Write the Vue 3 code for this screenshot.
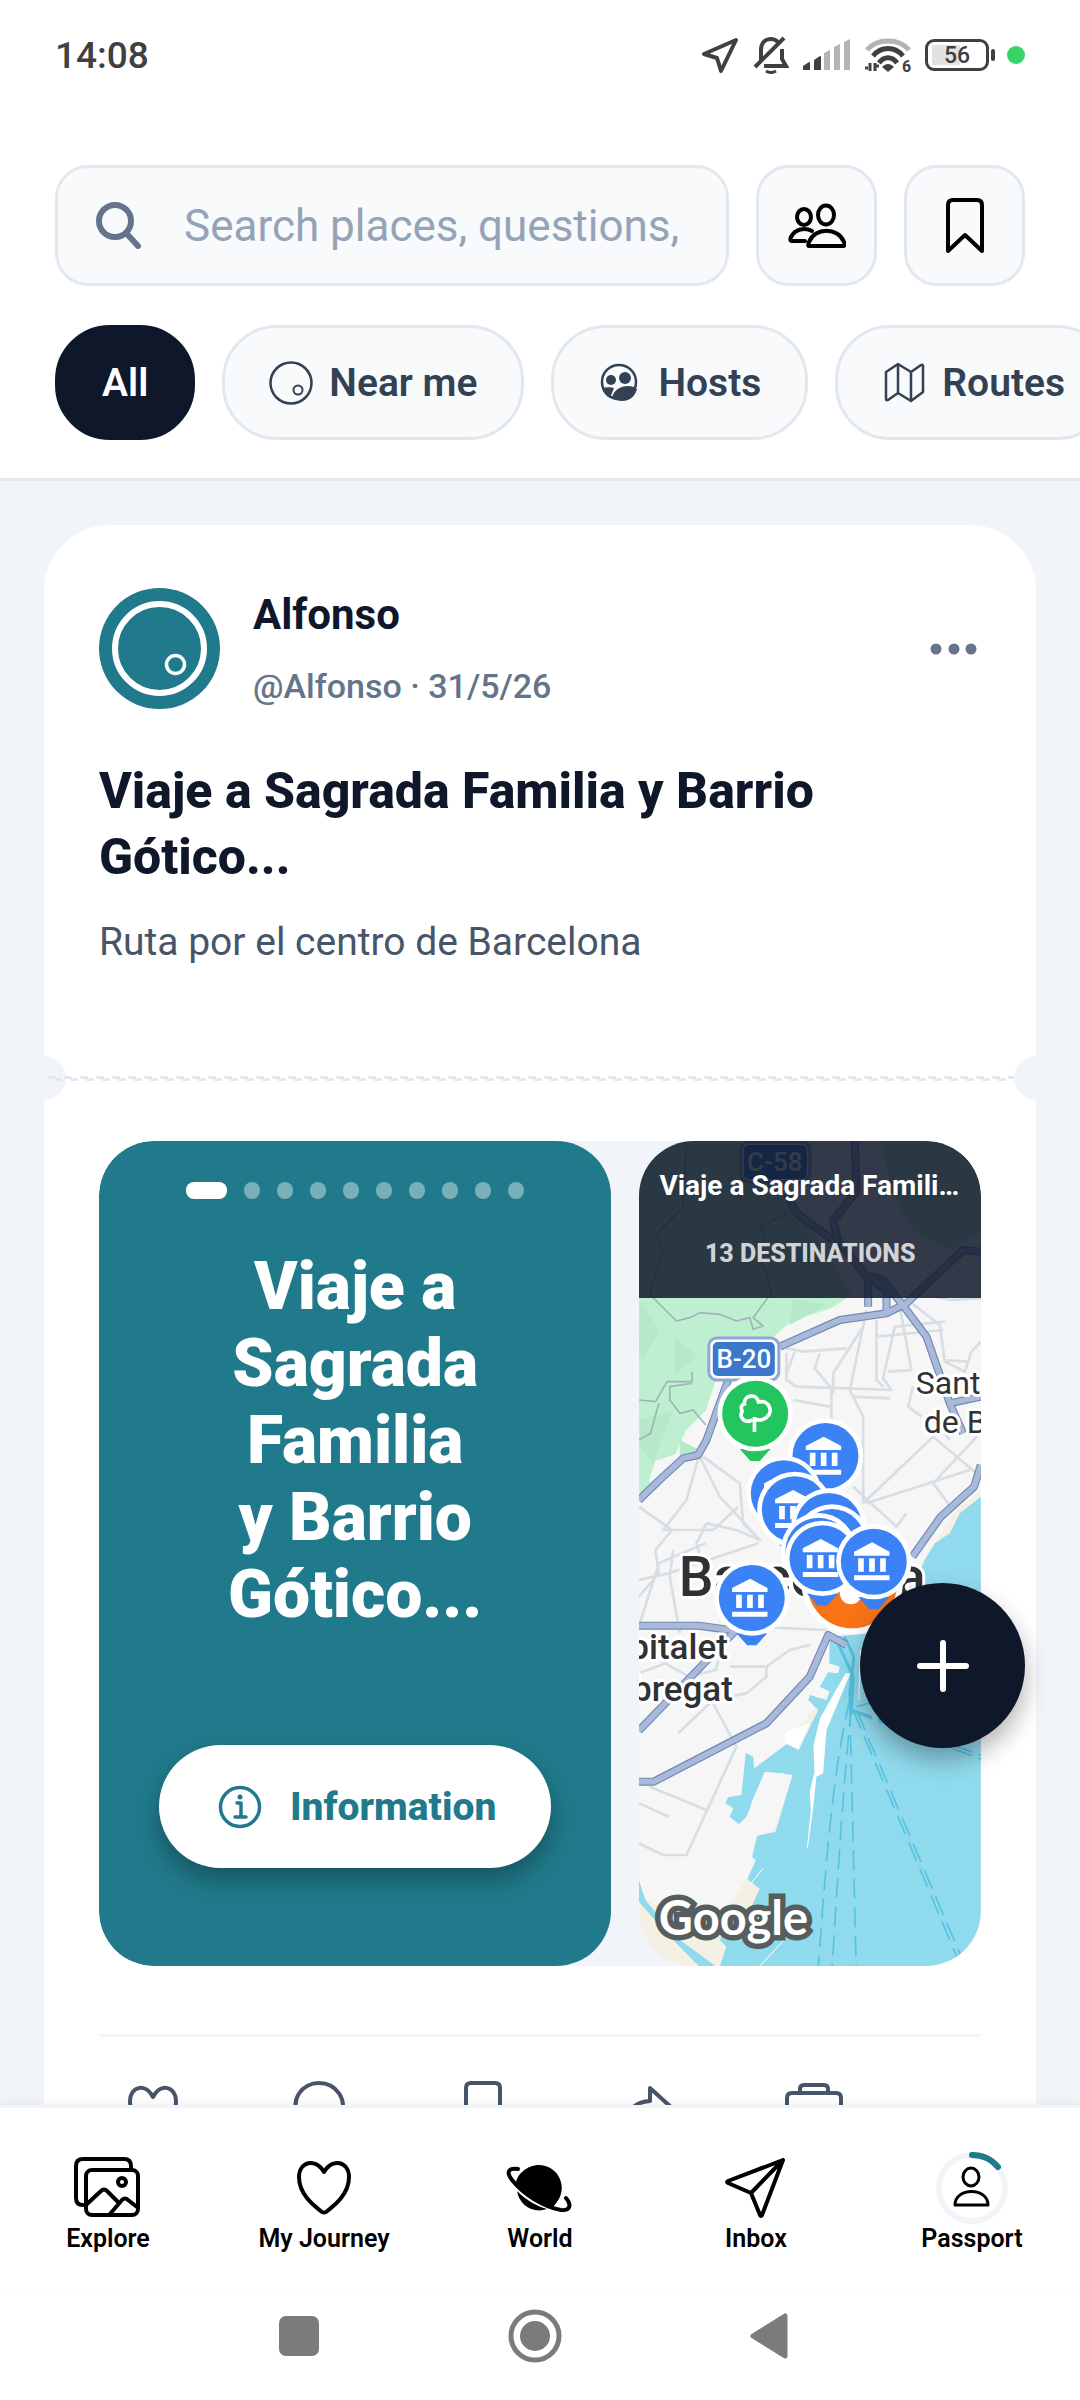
<template>
  <div class="app">
    <div class="status-bar">
      <span class="clock">14:08</span>
      <div class="status-icons">
        <svg width="38" height="38" viewBox="0 0 38 38" fill="none" stroke="#404040" stroke-width="4" stroke-linejoin="round">
          <path d="M35 4 20 35l-4-13L3 18z" />
        </svg>
        <svg width="36" height="38" viewBox="0 0 36 38" fill="none" stroke="#404040" stroke-width="4">
          <path d="M8 25V14C8 7 12 3 18 3c3 0 5 1 7 3M29 13v10l4 7H11" />
          <path d="M2 31 31 2" />
          <path d="M13 35q5 3 10 0" stroke-width="3" />
        </svg>
        <svg width="48" height="32" viewBox="0 0 48 32">
          <path d="M0 31v-4l6-4q1 0 1 1v7zM11 31V21l6-4q1 0 1 1v13z" fill="#404040" />
          <path d="M21 31V14l6-3v20zM31 31V8l6-3v26zM41 31V3l6-3v31z" fill="#b4b4b4" />
        </svg>
        <svg class="wifi" width="46" height="36" viewBox="0 0 46 36" fill="none" stroke-width="5">
          <path d="M2 13C12 1 34 1 44 13" stroke="#b4b4b4" />
          <path d="M8 19C16 9 30 9 38 19M14 26c5-7 13-7 18 0" stroke="#404040" />
          <path d="m17 30c4-4 8-4 12 0l-6 5z" fill="#404040" />
          <path d="M5 26v8M10 26v8M0 31h3M11 29h3" stroke="#404040" stroke-width="3" />
          <text x="37" y="35" class="wifi-gen">6</text>
        </svg>
        <div class="battery"><span>56</span></div>
        <span class="live-dot"></span>
      </div>
    </div>

    <header class="header">
      <div class="search-row">
        <label class="search">
          <svg width="47" height="47" viewBox="0 0 47 47" fill="none" stroke="#64748b" stroke-width="6" stroke-linecap="round">
            <circle cx="19" cy="19" r="16" />
            <path d="m31 32 11 12" />
          </svg>
          <input v-model="query" type="text" placeholder="Search places, questions," aria-label="Search" />
        </label>
        <button type="button" class="square-btn" aria-label="People">
          <svg width="58" height="46" viewBox="0 0 58 46" fill="none" stroke="#000" stroke-width="4" stroke-linecap="round" stroke-linejoin="round">
            <ellipse cx="16" cy="14" rx="7" ry="8" />
            <ellipse cx="38" cy="12" rx="8" ry="9.500" />
            <path d="M21 43h34c2 0 2-2 1-4-6-15-29-15-35 0-1 2-1 4 0 4z" />
            <path d="M17 38H4c-2 0-2-2-1-4 4-8 14-10 21-6" />
          </svg>
        </button>
        <button type="button" class="square-btn" aria-label="Saved">
          <svg width="40" height="57" viewBox="0 0 40 57" fill="none" stroke="#000" stroke-width="4" stroke-linejoin="round">
            <path d="M3 54V8q0-5 5-5h24q5 0 5 5v46L20 38z" />
          </svg>
        </button>
      </div>
      <div class="chips">
        <button
          v-for="chip in chips"
          :key="chip.name"
          type="button"
          :class="['chip', { active: chip.name === selected }]"
          @click="selected = chip.name"
        >
          <svg v-if="chip.icon" width="44" height="44" viewBox="0 0 44 44" fill="none" stroke="currentColor" stroke-width="2.500" stroke-linejoin="round">
            <template v-if="chip.icon === 'near'">
              <circle cx="22" cy="22" r="20.500" />
              <circle cx="29" cy="29" r="4.500" stroke-width="2" />
            </template>
            <template v-if="chip.icon === 'hosts'">
              <circle cx="21" cy="21" r="17" />
              <g fill="currentColor" stroke="none">
                <circle cx="13" cy="19" r="5" />
                <circle cx="27" cy="17" r="6" />
                <path d="M4 27c4-1 9-1 12 0l-4 10C8 35 5 31 4 27z" />
                <path d="M14 37c2-12 18-15 25-9-3 12-15 15-25 9z" />
              </g>
            </template>
            <template v-if="chip.icon === 'routes'">
              <path d="m4 11 12-8 13 8 10-7q2-1 2 1v26L29 40l-13-8-10 7q-2 1-2-1zM16 3v29M29 11v29" />
            </template>
          </svg>
          {{ chip.name }}
        </button>
      </div>
    </header>

    <main class="feed">
      <article class="card">
        <div class="author">
          <svg class="avatar" width="121" height="121" viewBox="0 0 121 121" fill="none" stroke="#fff">
            <circle cx="60.500" cy="60.500" r="60.500" fill="#207a8b" stroke="none" />
            <circle cx="60.500" cy="60.500" r="44.500" stroke-width="6" />
            <circle cx="76.500" cy="76.500" r="9" stroke-width="3.500" />
          </svg>
          <div class="author-text">
            <strong>Alfonso</strong>
            <span>@Alfonso · 31/5/26</span>
          </div>
          <button type="button" class="more" aria-label="More options">
            <svg width="48" height="12" viewBox="0 0 48 12" fill="#64748b">
              <circle cx="6" cy="6" r="5.500" /><circle cx="24" cy="6" r="5.500" /><circle cx="41" cy="6" r="5.500" />
            </svg>
          </button>
        </div>
        <h2>Viaje a Sagrada Familia y Barrio Gótico...</h2>
        <p class="description">Ruta por el centro de Barcelona</p>

        <div class="perforation"></div>

        <div class="media">
          <section class="slide">
            <div class="dots">
              <i v-for="n in 10" :key="n" :class="{ on: n === 1 }"></i>
            </div>
            <h3>Viaje a<br />Sagrada<br />Familia<br />y Barrio<br />Gótico...</h3>
            <button type="button" class="info-btn">
              <svg width="44" height="44" viewBox="0 0 44 44" fill="none" stroke="currentColor" stroke-width="3.500" stroke-linecap="round" stroke-linejoin="round">
                <circle cx="22" cy="22" r="19.500" />
                <path d="M19 18h4v14M17 32h11" />
                <circle cx="22" cy="12" r="2.500" fill="currentColor" stroke="none" />
              </svg>
              Information
            </button>
          </section>

          <section class="map">
            <svg class="map-canvas" viewBox="0 0 342 825" preserveAspectRatio="xMidYMid slice">
              <g transform="scale(.33333) translate(-57 -63)" fill="none" stroke-linejoin="round">
                <path fill="#f6f6f6" d="M57 63h1026v2475H57z" />
                <!-- parks -->
                <path fill="#beefd1" d="M57 63h300l220 270 120 190-60 40-120 40-60 50-80 10-30 60-60 60-30 90-60 60-30 70-60 20-20 60 20 10-40 30-50-50z" />
                <path fill="#beefd1" d="M790 63h293v270l-90 60-120-70-60-110z" />
                <path fill="#b6e8ca" d="m60 540 60 90-50 90-13-20zM165 650l70 60-70 55zM520 535l100 20-110 60zM60 900l100-30-60 160-40-50zM180 960l60 30-60 30z" />
                <!-- sea and harbour -->
                <path fill="#f4f0e4" d="M1083 1110 1000 1180 950 1265 905 1325 880 1440 700 1550 640 1700 520 1840 480 1840 470 1960 520 1960 460 2140 330 2360 240 2420 57 2330V2538h1026z" />
                <path fill="#f6f6f6" d="m880 1440-180 110-60 150-120 140-20 40-60 95-30 190-80 110-60-20 120-300 50-320 220-200z" />
                <path fill="#90daee" d="M1083 1130 1020 1180 990 1240 945 1270 915 1320 870 1420 760 1540 630 1550 628 1630 660 1640 655 1660 625 1657 600 1700 630 1715 620 1740 570 1725 565 1740 595 1770 537 1890 500 1873 403 1945 400 1910 378 1898 365 2025 325 2032 317 2050 340 2065 330 2090 357 2113 380 2090 435 1955 518 1965 467 2137 413 2142 397 2210 408 2220 383 2277 420 2307 385 2380 320 2410 300 2460 320 2480 300 2538h783z" />
                <path fill="#f6f6f6" d="m435 1957 60 3-38 177-80 20 18-110z" />
                <path fill="#90daee" d="m57 2280 20 60 90 110 120 88h-50L150 2450 57 2345z" />
                <path fill="#fff" d="m692 1660-72 170-10 130-20 10-12 110-14 105h-3l12-110-3-60 14-60-3-80 20-80 76-135zM725 1590l-7 150M500 1835l70-25-35 78-42-22z" />
                <path stroke="#fff" stroke-width="3" d="m430 2245-40 50M550 2400l-130 138M722 1590l-5 150" />
                <!-- ferry lines -->
                <g stroke="#55c3df" stroke-width="5">
                  <path stroke-width="9" d="m655 1570 45 100-5 110-5-60 12-110-28-60" />
                  <path stroke-dasharray="60 26" d="M690 1740C640 1950 620 2200 596 2538M695 1760C670 2000 655 2250 637 2538M690 1760 709 2538M700 1770l310 738M712 1775l312 735" />
                  <path stroke-dasharray="60 20" d="m700 1770 383 135M700 1775l383 142M710 1760l110-30" />
                </g>
                <!-- streets -->
                <g stroke="#d7dee4" stroke-width="8">
                  <path d="m480 680 70 15 130-10M600 700l-15 45 50 60v190M500 760l25-65M500 700v80l30 20 285 10-25-35 35-155 150-15M740 570l-50 240 40 80v260M770 600v180l20 20M770 650l200-20M840 560l35 190-70 5M700 830l110 5M520 840l110 20M880 800l-15 60 40 30M730 620l-90 140v60" />
                  <path d="m870 545 90 70 15 110 60 30 20-60 28-30M1083 535l-90 5-50-10M970 720l80 5M730 1150l210-200 130 110M740 1150l310-100M700 1100l130 120 30-40M940 1090l60 80M940 1090l140-150M960 920l30 40" />
                  <path d="m240 1000-40 140-70 90h150l75-70M240 1010l60 120 120 130-70-30-90-20-30 60 30 100M57 1160l100 70-50 60 10 70-60 70M250 1010l110 80 10 120 50 50M57 1520l60-190 140-60M57 1380l90-20 180-60 90-30M160 1290l-10 80 30 170" />
                  <path d="m57 1660 80-30 70 40 80-20 20-60M330 1640h110l70-50 60-15M440 1640v30l-60 50-50 10-60 20-95 90M280 1750l70 130-150 325h-70L57 2170M90 2000l170 70M57 2050l90 40M400 1520l220 10" />
                </g>
                <g stroke="#9fb5b5" stroke-width="5">
                  <path d="M200 63l-10 200-80 80 20 50-40 130 80 80 40-10 30-15 60 5 50 20 40-10 10 35 30-10-30-25 55-75-15-60-25-50 20-40-10-50 80-40M57 840l50 5 35-60h75v-30M57 960l35-20 25-90" />
                  <path d="m215 790-65 10v40l30 40 40-10 38 45" />
                </g>
                <!-- motorways -->
                <g v-for="layer in roadLayers" :key="layer.color" :stroke="layer.color">
                  <path :stroke-width="layer.width" d="M57 1140 130 1070 190 1015 235 1005 260 960 325 780M480 680 660 600 800 580 860 550 1030 390 1083 395" />
                  <path :stroke-width="layer.width" d="m705 63 5 150-70 90 15 60L745 475v85M500 220l30 60 110 80M800 575v-60l-50-45 40 10 70 90 60 80 70 200 40 90M990 850l93-20M1083 1035l-20 65-100 90-85 120" />
                  <path :stroke-width="layer.width" d="M57 1985h45L440 1810l130-140 55-125 55 30M57 1517h180l110 15-290 300" />
                </g>
              </g>

              <g class="place">
                <text x="277" y="253" font-size="32">Sant</text>
                <text x="285" y="292" font-size="32">de B</text>
                <text x="89" y="518" font-size="35" font-weight="500" text-anchor="end">pitalet</text>
                <text x="94" y="560" font-size="35" font-weight="500" text-anchor="end">bregat</text>
                <text x="40" y="455" font-size="55" font-weight="500">Barcelona</text>
              </g>
              <g class="road-sign">
                <rect x="102" y="1" width="69" height="40" rx="8" />
                <rect class="inner" x="105" y="4" width="63" height="34" rx="5" />
                <text x="136" y="30">C-58</text>
                <rect x="70" y="197" width="70" height="42" rx="8" />
                <rect class="inner" x="74" y="201" width="62" height="34" rx="5" />
                <text x="105" y="227">B-20</text>
              </g>

              <g transform="scale(.33333) translate(-57 -63)">
                <circle cx="697" cy="1390" r="152" fill="#fff" />
                <circle cx="697" cy="1390" r="135" fill="#f97316" />
                <circle cx="693" cy="1420" r="33" fill="#fff" />
                <g v-for="pin in pins" :key="pin.id" :transform="`translate(${pin.x} ${pin.y})`">
                  <path :fill="pin.color" d="M-46 106h92l-32 36h-28z" />
                  <circle r="113" fill="#fff" />
                  <circle r="99" :fill="pin.color" />
                  <path v-if="pin.type === 'museum'" fill="#fff" d="M-59-18v-12L-5-58 47-30v12zM-47-10h17v40h-17zM-14-10H3v40h-17zM19-10h17v40H19zM-59 41H47v15H-59z" />
                  <path v-else fill="none" stroke="#fff" stroke-width="11" d="M-2 55V10M-8 18c-20 14-42-5-31-25-6-14 0-21 7-22C-36-55 5-64 10-35 42-43 56-5 35 10 24 22 8 20 0 16" />
                </g>
              </g>
              <text class="google" x="20" y="794">Google</text>
            </svg>
            <div class="map-header">
              <strong>Viaje a Sagrada Familia y Barrio Gótico...</strong>
              <span>13 DESTINATIONS</span>
            </div>
          </section>
        </div>

        <div class="actions">
          <button v-for="action in actions" :key="action.name" type="button" :aria-label="action.name">
            <svg width="60" height="60" viewBox="0 0 60 60" fill="none" stroke="#475569" stroke-width="4" stroke-linejoin="round" stroke-linecap="round">
              <path :d="action.path" />
            </svg>
          </button>
        </div>
      </article>
    </main>

    <button type="button" class="fab" aria-label="Create">
      <svg width="54" height="54" viewBox="0 0 54 54" fill="none" stroke="#fff" stroke-width="6" stroke-linecap="round">
        <path d="M27 4v46M4 27h46" />
      </svg>
    </button>

    <nav class="tabs">
      <a v-for="tab in tabs" :key="tab.name" href="#" @click.prevent>
        <svg width="72" height="72" viewBox="0 0 72 72" fill="none" stroke="#000" stroke-width="4" stroke-linejoin="round" stroke-linecap="round">
          <template v-if="tab.icon === 'explore'">
            <path d="M11 53q-7 0-7-7V14q0-7 7-7h41q7 0 7 7v3" />
            <rect x="14" y="18" width="52" height="45" rx="6" />
            <circle cx="50" cy="30" r="4" />
            <path d="m15 52 14-13q3-3 6 0l12 12M38 62l12-14q3-3 6 0l9 7" />
          </template>
          <path v-if="tab.icon === 'heart'" d="M36 20C27 5 11 10 11 25c0 17 14 28 23 35q2 1 4 0c9-7 23-18 23-35 0-15-16-20-25-5z" />
          <template v-if="tab.icon === 'world'">
            <g fill="#000" stroke="none">
              <path d="M12 32C12 23 23 13 35 13a23 23 0 0 1 18 37l-4 5C35 51 22 43 12 32z" />
              <path d="M13 39c9 9 19 15 30 18-14 5-28-4-30-18z" />
            </g>
            <path d="M14 17C4 16 2 20 8 28c12 15 32 27 49 30 9 1 11-5 5-12" />
          </template>
          <path v-if="tab.icon === 'inbox'" d="M63 8 8 29q-2 1 0 2l23 10 9 22q1 2 2 0L63 8 31 41" />
          <template v-if="tab.icon === 'passport'">
            <circle cx="36" cy="36" r="33" stroke="#f1f5f9" stroke-width="6" />
            <path d="M36 3q16 0 26 12" stroke="#207a8b" stroke-width="6" />
            <g stroke-width="3">
              <ellipse cx="35" cy="25" rx="8" ry="9" />
              <path d="M19 53h33c0-18-33-18-33 0z" />
            </g>
          </template>
        </svg>
        <span>{{ tab.name }}</span>
      </a>
    </nav>

    <div class="system-nav">
      <button type="button" aria-label="Recents">
        <svg width="56" height="56" viewBox="0 0 56 56" fill="#7b7b7b"><rect x="8" y="8" width="40" height="40" rx="7" /></svg>
      </button>
      <button type="button" aria-label="Home">
        <svg width="56" height="56" viewBox="0 0 56 56" fill="#7b7b7b">
          <circle cx="28" cy="28" r="24" fill="none" stroke="#7b7b7b" stroke-width="5" />
          <circle cx="28" cy="28" r="15" />
        </svg>
      </button>
      <button type="button" aria-label="Back">
        <svg width="56" height="56" viewBox="0 0 56 56" fill="#7b7b7b" stroke="#7b7b7b" stroke-width="5" stroke-linejoin="round"><path d="M42 8v40L10 28z" /></svg>
      </button>
    </div>
  </div>
</template>

<script setup>
import { ref } from 'vue'

const query = ref('')
const selected = ref('All')

const chips = [
  { name: 'All' },
  { name: 'Near me', icon: 'near' },
  { name: 'Hosts', icon: 'hosts' },
  { name: 'Routes', icon: 'routes' },
]

const roadLayers = [
  { color: '#7488b4', width: 24 },
  { color: '#a8b9d9', width: 17 },
]

const blue = '#3b82f6'
const pins = [
  { id: 1, x: 406, y: 881, color: '#22c55e', type: 'park' },
  { id: 2, x: 617, y: 1008, color: blue, type: 'museum' },
  { id: 3, x: 492, y: 1120, color: blue, type: 'museum' },
  { id: 4, x: 525, y: 1168, color: blue, type: 'museum' },
  { id: 5, x: 627, y: 1218, color: blue, type: 'museum' },
  { id: 6, x: 637, y: 1266, color: blue, type: 'museum' },
  { id: 7, x: 596, y: 1292, color: blue, type: 'museum' },
  { id: 8, x: 608, y: 1315, color: blue, type: 'museum' },
  { id: 9, x: 762, y: 1325, color: blue, type: 'museum' },
  { id: 10, x: 396, y: 1434, color: blue, type: 'museum' },
]

const actions = [
  { name: 'Like', path: 'M29 18C21 3 6 8 6 22c0 14 12 24 23 32 11-8 23-18 23-32 0-14-15-19-23-4z' },
  { name: 'Comment', path: 'M8 54l3-14C-1 20 14 4 30 4s31 16 20 36C43 52 27 56 8 54z' },
  { name: 'Save', path: 'M12 56V9q0-5 5-5h24q5 0 5 5v47L29 42z' },
  { name: 'Share', path: 'M31 9l22 20-22 20V38C18 37 10 42 5 50 6 34 14 23 31 22z' },
  { name: 'Trip', path: 'M8 14h44q5 0 5 5v32q0 5-5 5H8q-5 0-5-5V19q0-5 5-5zM16 14v-4q0-4 4-4h20q4 0 4 4v4' },
]

const tabs = [
  { name: 'Explore', icon: 'explore' },
  { name: 'My Journey', icon: 'heart' },
  { name: 'World', icon: 'world' },
  { name: 'Inbox', icon: 'inbox' },
  { name: 'Passport', icon: 'passport' },
]
</script>

<style>
body {
  margin: 0;
  background: #fff;
}
</style>

<style scoped>
* {
  box-sizing: border-box;
}
.app {
  position: relative;
  display: flex;
  flex-direction: column;
  height: 100vh;
  overflow: hidden;
  background: #fff;
  color: #0f172a;
  font-family: Roboto, 'Noto Sans', sans-serif;
}
button {
  padding: 0;
  border: none;
  background: none;
  font: inherit;
  color: inherit;
  cursor: pointer;
}
svg {
  display: block;
  flex: none;
}
.status-bar {
  display: flex;
  align-items: center;
  justify-content: space-between;
  height: 110px;
  padding: 0 55px;
  color: #404040;
}
.clock {
  font-size: 37px;
  font-weight: 500;
}
.status-icons {
  display: flex;
  align-items: center;
  gap: 14px;
}
.wifi {
  overflow: visible;
}
.wifi-gen {
  fill: #404040;
  stroke: none;
  font-size: 16px;
  font-weight: 700;
}
.battery {
  position: relative;
  display: flex;
  align-items: center;
  justify-content: center;
  width: 64px;
  height: 32px;
  border: 3px solid #404040;
  border-radius: 9px;
  background: linear-gradient(#e2e2e2, #e2e2e2) 4px center / 28px 20px no-repeat;
  font-size: 23px;
  font-weight: 500;
}
.battery::after {
  content: '';
  position: absolute;
  right: -9px;
  width: 4px;
  height: 12px;
  border-radius: 2px;
  background: #404040;
}
.live-dot {
  width: 18px;
  height: 18px;
  margin-left: 4px;
  border-radius: 50%;
  background: #36d367;
}
.header {
  padding: 55px 0 38px 55px;
  border-bottom: 3px solid #e2e8f0;
}
.search-row {
  display: flex;
  gap: 27px;
  padding-right: 55px;
}
.search {
  display: flex;
  flex: 1;
  align-items: center;
  gap: 41px;
  min-width: 0;
  height: 121px;
  padding: 0 38px;
  border: 3px solid #e2e8f0;
  border-radius: 33px;
  background: #f8fafc;
}
.search input {
  flex: 1;
  min-width: 0;
  padding: 0;
  border: none;
  outline: none;
  background: none;
  font-family: inherit;
  font-size: 44px;
  color: #0f172a;
}
.search input::placeholder {
  color: #94a3b8;
}
.square-btn {
  display: grid;
  place-items: center;
  width: 121px;
  height: 121px;
  border: 3px solid #e2e8f0;
  border-radius: 33px;
  background: #f8fafc;
}
.chips {
  display: flex;
  gap: 27px;
  margin-top: 39px;
  overflow: hidden;
}
.chip {
  display: flex;
  flex: none;
  align-items: center;
  gap: 16px;
  height: 115px;
  padding: 0 44px;
  border: 3px solid #e2e8f0;
  border-radius: 55px;
  background: #f8fafc;
  color: #334155;
  font-size: 39px;
  font-weight: 600;
}
.chip.active {
  border-color: #0f172a;
  background: #0f172a;
  color: #fff;
}
.feed {
  flex: 1;
  min-height: 0;
  padding: 44px 44px 0;
  overflow: hidden;
  background: #f1f5f9;
}
.card {
  padding: 63px 55px 55px;
  border-radius: 66px;
  background: #fff;
}
.author {
  display: flex;
  align-items: center;
  gap: 33px;
}
.author-text {
  display: flex;
  flex: 1;
  flex-direction: column;
  gap: 24px;
}
.author-text strong {
  font-size: 42px;
  font-weight: 700;
  line-height: 50px;
}
.author-text span {
  color: #64748b;
  font-size: 34px;
  font-weight: 500;
  line-height: 44px;
}
.more {
  padding: 22px 3px 22px 0;
}
h2 {
  margin: 49px 0 0;
  font-size: 50px;
  font-weight: 800;
  line-height: 66px;
}
.description {
  margin: 25px 0 0;
  color: #475569;
  font-size: 39px;
  line-height: 55px;
}
.perforation {
  position: relative;
  height: 44px;
  margin: 86px -55px 41px;
  overflow: hidden;
  background:
    repeating-linear-gradient(90deg, #e2e8f0 0 8px, transparent 8px 16px) 4px 20px / 100% 3px no-repeat,
    repeating-linear-gradient(90deg, #e2e8f0 0 8px, transparent 8px 16px) 10px 22px / 100% 3px no-repeat,
    radial-gradient(circle at 0 50%, #f1f5f9 22px, transparent 22px);
}
.perforation::after {
  content: '';
  position: absolute;
  top: 0;
  right: -22px;
  width: 44px;
  height: 44px;
  border-radius: 50%;
  background: #f1f5f9;
}
.media {
  display: grid;
  grid-template-columns: 3fr 2fr;
  gap: 28px;
  min-height: 825px;
  border-radius: 55px;
  overflow: hidden;
  background: #f1f5f9;
}
.slide {
  display: flex;
  flex-direction: column;
  align-items: center;
  padding: 41px 44px 98px;
  border-radius: 55px;
  background: #207a8b;
  color: #fff;
}
.dots {
  display: flex;
  gap: 17px;
}
.dots i {
  width: 16px;
  height: 17px;
  border-radius: 8px;
  background: rgba(255, 255, 255, 0.4);
}
.dots .on {
  width: 41px;
  background: #fff;
}
.slide h3 {
  margin: 49px 0 auto;
  font-size: 66px;
  font-weight: 900;
  line-height: 77px;
  text-align: center;
}
.info-btn {
  display: flex;
  align-items: center;
  gap: 28px;
  height: 123px;
  padding: 0 55px 0 59px;
  border-radius: 62px;
  background: #fff;
  box-shadow: 0 12px 24px rgba(0, 0, 0, 0.3);
  color: #207a8b;
  font-size: 39px;
  font-weight: 800;
}
.map {
  position: relative;
  border-radius: 55px;
  overflow: hidden;
}
.map-canvas {
  position: absolute;
  inset: 0;
  width: 100%;
  height: 100%;
}
.place text {
  fill: #303134;
  stroke: #fff;
  stroke-width: 6px;
  stroke-linejoin: round;
  paint-order: stroke;
}
.road-sign rect {
  fill: #fff;
  stroke: #92a8d3;
  stroke-width: 3px;
}
.road-sign .inner {
  fill: #3b78c9;
  stroke: none;
}
.road-sign text {
  fill: #fff;
  font-size: 26px;
  font-weight: 500;
  text-anchor: middle;
}
.google {
  fill: #fff;
  stroke: #565d5f;
  stroke-width: 11px;
  paint-order: stroke;
  font-family: Lato, sans-serif;
  font-size: 47px;
  font-weight: 700;
}
.map-header {
  position: relative;
  display: flex;
  flex-direction: column;
  align-items: center;
  gap: 33px;
  height: 157px;
  padding: 27px 20px;
  background: rgba(15, 23, 42, 0.85);
  color: #fff;
}
.map-header strong {
  max-width: 100%;
  overflow: hidden;
  font-size: 28px;
  font-weight: 700;
  line-height: 36px;
  text-overflow: ellipsis;
  white-space: nowrap;
}
.map-header span {
  color: rgba(255, 255, 255, 0.8);
  font-size: 25px;
  font-weight: 800;
  line-height: 33px;
}
.actions {
  display: flex;
  gap: 105px;
  margin-top: 68px;
  padding: 42px 25px 0;
  border-top: 3px solid #f1f5f9;
}
.fab {
  position: absolute;
  right: 55px;
  bottom: 652px;
  display: grid;
  place-items: center;
  width: 165px;
  height: 165px;
  border-radius: 50%;
  background: #0f172a;
  box-shadow: 0 12px 24px rgba(0, 0, 0, 0.3);
}
.tabs {
  position: relative;
  display: grid;
  grid-template-columns: repeat(5, 1fr);
  padding: 44px 0 38px;
  border-top: 3px solid #f1f5f9;
  background: #fff;
  box-shadow: 0 -3px 8px rgba(15, 23, 42, 0.05);
}
.tabs a {
  display: flex;
  flex-direction: column;
  align-items: center;
  color: #000;
  text-decoration: none;
}
.tabs span {
  font-size: 25px;
  font-weight: 600;
  line-height: 30px;
}
.system-nav {
  display: flex;
  align-items: center;
  justify-content: center;
  gap: 180px;
  height: 108px;
  padding: 0 10px 20px 0;
}
</style>
